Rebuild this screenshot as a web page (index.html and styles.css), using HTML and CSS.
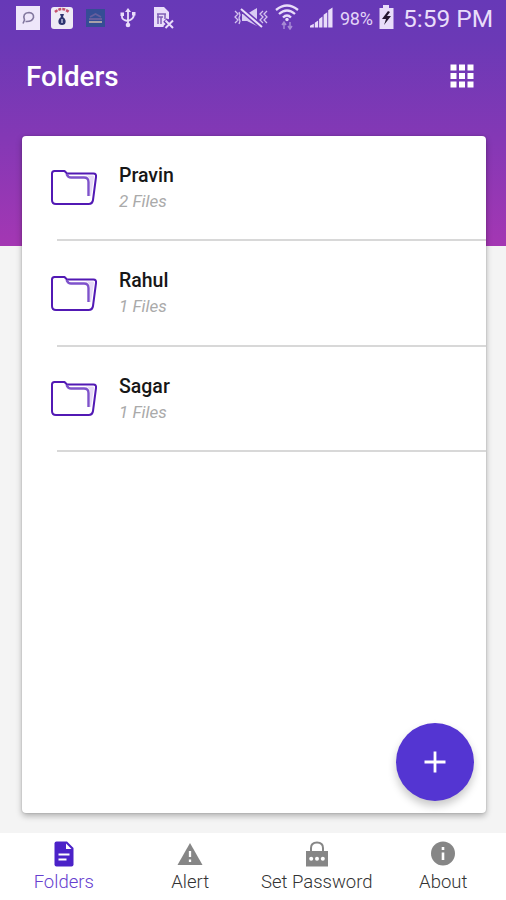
FILE: index.html
```html
<!DOCTYPE html>
<html lang="en">
<head>
<meta charset="utf-8">
<title>Folders</title>
<link rel="stylesheet" href="styles.css">
</head>
<body>
<svg width="0" height="0" class="defs">
  <symbol id="folder" viewBox="0 0 48 38">
    <path d="M2 4.500Q2 2 4.500 2H14.500L17 4.500H43.500Q46.500 4.500 46 8L43 31Q42.500 35 38.500 35H6Q2 35 2 31Z" fill="#fff" stroke="#5219b4" stroke-width="2" stroke-linejoin="round"/>
    <path d="M36 6.500H43Q44 6.500 44 8L41 27H40V12Q40 8 36 6.500Z" fill="#e6d9f7"/>
    <path d="M16.500 5Q18 8.500 21 8.500H34Q38.500 8.500 38.500 13V27" fill="none" stroke="#7e52cb" stroke-width="2.400"/>
  </symbol>
</svg>
<div class="app">
  <header class="status">
    <div class="status-left">
      <svg width="24" height="24" viewBox="0 0 24 24"><path fill="#eee6fa" d="M0 0H24V24H0Z"/><path d="M7 17.500L8.500 14Q6 7 13 6.500Q18 7 17.500 11.500Q16 16 9.500 15.500" fill="none" stroke="#82779e" stroke-width="1.600"/></svg>
      <svg width="24" height="24" viewBox="0 0 24 24"><rect x="1" y="1" width="22" height="22" rx="3" fill="#eeeaf5"/><path d="M5 6Q12 0 19 6" fill="none" stroke="#c5506c" stroke-width="2.500" stroke-dasharray="3 1"/><path d="M10 8H14L13 11Q17 14 15 18Q12 20 9 18Q7 14 11 11Z" fill="#2d3470"/><path d="M12 13V17" stroke="#b9bbdd" stroke-width="1.500"/></svg>
      <svg class="wide" width="20" height="20" viewBox="0 0 20 20"><path fill="#354d95" d="M0 1H19V19H0Z"/><path d="M4 9L9.500 6L15 9M3 11H16" fill="none" stroke="#655e9d" stroke-width="1.800"/><path d="M3 14H16" stroke="#a8a0a8" stroke-width="2"/></svg>
      <svg width="16" height="22" viewBox="0 0 16 22"><g fill="none" stroke="#e9ddfa" stroke-width="1.800"><path d="M8 3V18M2 7V10Q2 13 8 14Q14 12 14 7"/></g><path d="M5 5L8 1L11 5ZM.5 5.500H4V9H.5ZM12 5H15.500V8.500H12Z" fill="#e9ddfa"/><circle cx="8" cy="18" r="2.300" fill="#e9ddfa"/></svg>
      <svg width="22" height="24" viewBox="0 0 22 24"><path d="M1 1H11L16 6V13L13 14L14 21H1Z" fill="#e9ddfa"/><path d="M4 8H13M4 11H10M5 8V18M8 11V18M12 8V13" stroke="#8160b7" stroke-width="1.500"/><path d="M12 14L20 22M20 14L12 22" stroke="#6a39b6" stroke-width="5"/><path d="M12.500 14.500L20 22M20 14.500L12.500 22" stroke="#e9ddfa" stroke-width="2"/></svg>
    </div>
    <div class="status-right">
      <svg width="34" height="22" viewBox="0 0 34 22"><path d="M8 7H13L23 1V19L13 14H8Z" fill="#d9cbf3"/><path d="M7 2L28 20" stroke="#6a39b6" stroke-width="5"/><path d="M7 2L28 20" stroke="#e9ddfa" stroke-width="2"/><path d="M1 4L4 7L1 10L4 13L1 16M5 5L6 8L5 11L6 14L5 17M29 4L26 7L29 10L26 13L29 16M33 4L30 7L33 10L30 13L33 16" fill="none" stroke="#d4c3ef" stroke-width="1.300"/></svg>
      <svg class="wifi" width="24" height="26" viewBox="0 0 24 26"><g fill="none" stroke="#e9ddfa" stroke-width="2.300"><path d="M1 6Q12-3 23 6M4 10Q12 3 20 10M8 13.500Q12 9.500 16 13.500"/></g><circle cx="12" cy="15.500" r="1.700" fill="#e9ddfa"/><path d="M9 25V19M7 21L9 18L11 21M15 18V24M13 22L15 25L17 22" stroke="#a78ad5" stroke-width="1.500" fill="none"/></svg>
      <svg class="signal" width="23" height="23" viewBox="0 0 24 23"><path d="M0 22V20L4 18V22ZM5 22V17L8.500 14.500V22ZM9.500 22V13L13 10.500V22ZM14.200 22V8.500L18 6V22ZM19 22V4L23.500 1V22Z" fill="#e9ddfa"/></svg>
      <span class="percent">98%</span>
      <svg class="battery" width="15" height="24" viewBox="0 0 15 24"><path d="M4 0H10V3H14.500V24H.5V3H4Z" fill="#e9ddfa"/><path d="M9 6L3 14H7L5 20L12 11H8L11 7Z" fill="#25172f"/></svg>
      <span class="time">5:59 PM</span>
    </div>
  </header>
  <div class="toolbar">
    <h1>Folders</h1>
    <svg width="24" height="24" viewBox="0 0 24 24" fill="#fff"><path d="M.5.5H6.500V6.500H.5ZM9 .5H15V6.500H9ZM17.500.5H23.500V6.500H17.500ZM.5 9H6.500V15H.5ZM9 9H15V15H9ZM17.500 9H23.500V15H17.500ZM.5 17.500H6.500V23.500H.5ZM9 17.500H15V23.500H9ZM17.500 17.500H23.500V23.500H17.500Z"/></svg>
  </div>
  <main class="card">
    <div class="row"><svg class="folder" width="48" height="38"><use href="#folder"/></svg><div><div class="name">Pravin</div><div class="count">2 Files</div></div></div>
    <div class="row"><svg class="folder" width="48" height="38"><use href="#folder"/></svg><div><div class="name">Rahul</div><div class="count">1 Files</div></div></div>
    <div class="row"><svg class="folder" width="48" height="38"><use href="#folder"/></svg><div><div class="name">Sagar</div><div class="count">1 Files</div></div></div>
    <button class="fab" aria-label="Add folder"><svg width="22" height="22" viewBox="0 0 22 22"><path d="M11 .5V21.500M.5 11H21.500" stroke="#fff" stroke-width="2.800"/></svg></button>
  </main>
  <nav class="tabs">
    <div class="tab active"><svg width="26" height="26" viewBox="0 0 26 26"><path d="M3.500 2.500Q3.500.5 5.500.5H16L22.500 7V23.500Q22.500 25.500 20.500 25.500H5.500Q3.500 25.500 3.500 23.500Z" fill="#4b22c8"/><path d="M15 2.500V8H20.500Z" fill="#fff"/><path d="M7.500 13.500H18.500M7.500 18.500H15.500" stroke="#fff" stroke-width="1.900"/></svg><span>Folders</span></div>
    <div class="tab"><svg width="26" height="26" viewBox="0 0 26 26"><path d="M13 2L25.500 24H.5Z" fill="#868686"/><path d="M13 10V16M13 18.500V21" stroke="#fff" stroke-width="2.300"/></svg><span>Alert</span></div>
    <div class="tab"><svg width="26" height="26" viewBox="0 0 26 26"><path d="M7 11V7Q7 1.500 13 1.500Q19 1.500 19 7V11" fill="none" stroke="#868686" stroke-width="2"/><path d="M2 10H24V25.500H2Z" fill="#868686"/><g fill="#fff"><circle cx="7.200" cy="17.700" r="2"/><circle cx="13" cy="17.700" r="2"/><circle cx="18.800" cy="17.700" r="2"/></g></svg><span>Set Password</span></div>
    <div class="tab"><svg width="26" height="26" viewBox="0 0 26 26"><circle cx="13" cy="12.500" r="12" fill="#868686"/><path d="M13 6V9M13 11.500V19" stroke="#fff" stroke-width="2.600"/></svg><span>About</span></div>
  </nav>
</div>
</body>
</html>
```
FILE: styles.css
```css
* { box-sizing: border-box; }
body { margin: 0; font-family: Roboto, "Liberation Sans", sans-serif; }
svg { display: block; flex: none; }
.defs { position: absolute; }
.app {
  display: flex;
  flex-direction: column;
  width: 506px;
  height: 900px;
  background: linear-gradient(#6739b7 0, #6b39b6 40px, #8538b5 142px, #a437b3 246px) no-repeat 0 0 / 100% 246px, #f4f4f4;
}
.status { display: flex; justify-content: space-between; height: 35px; padding: 0 12px 0 16px; }
.status-left, .status-right { display: flex; align-items: center; }
.status-left { gap: 9.5px; }
.status-left .wide { margin: 0 5px 0 2.5px; }
.status-left svg:last-child { margin-left: 7px; }
.wifi { margin: -2px 0 0 7px; }
.signal { margin-left: 11px; }
.percent { width: 35px; margin: 2px 0 0 7px; font-size: 18px; letter-spacing: -.3px; color: #e3d5f7; white-space: nowrap; }
.battery { margin: -2px 0 0 4px; }
.time { width: 91px; margin: 2px 0 0 9px; font-size: 24.5px; letter-spacing: 0; color: #e9ddfa; white-space: nowrap; }
.toolbar { display: flex; justify-content: space-between; align-items: center; height: 81px; padding: 0 32px 0 26px; }
h1 { margin: 2px 0 0; font-size: 27.8px; font-weight: 500; color: #fff; }
.card {
  position: relative;
  flex: none;
  height: 677px;
  margin: 19.5px 20px 20.5px 22px;
  background: #fff;
  border-radius: 4px;
  box-shadow: 0 3px 6px rgba(0, 0, 0, .28), 0 0 2px rgba(0, 0, 0, .2);
}
.row { display: flex; height: 105.5px; padding: 27px 0 0 28px; gap: 21px; background: linear-gradient(#d8d8d8, #d8d8d8) no-repeat 35px 100% / 100% 2px; }
.folder { margin-top: 6.500px; }
.name { font-size: 19.500px; line-height: 26px; font-weight: 500; color: #171717; }
.count { font-size: 17px; line-height: 24px; font-style: italic; color: #aaa; }
.fab {
  position: absolute;
  right: 12px;
  bottom: 12px;
  display: grid;
  place-items: center;
  width: 78px;
  height: 78px;
  padding: 0;
  border: 0;
  border-radius: 50%;
  background: #5435d2;
  box-shadow: 0 5px 8px rgba(0, 0, 0, .22);
}
.tabs { display: grid; grid-template-columns: repeat(4, 1fr); flex: 1; background: #fff; }
.tab { display: flex; flex-direction: column; align-items: center; padding: 8px 0 0 1px; font-size: 18.500px; font-weight: 300; color: #333; white-space: nowrap; }
.tab span { line-height: 26px; margin-top: 2px; }
.tab.active { color: #6740cf; }
```
